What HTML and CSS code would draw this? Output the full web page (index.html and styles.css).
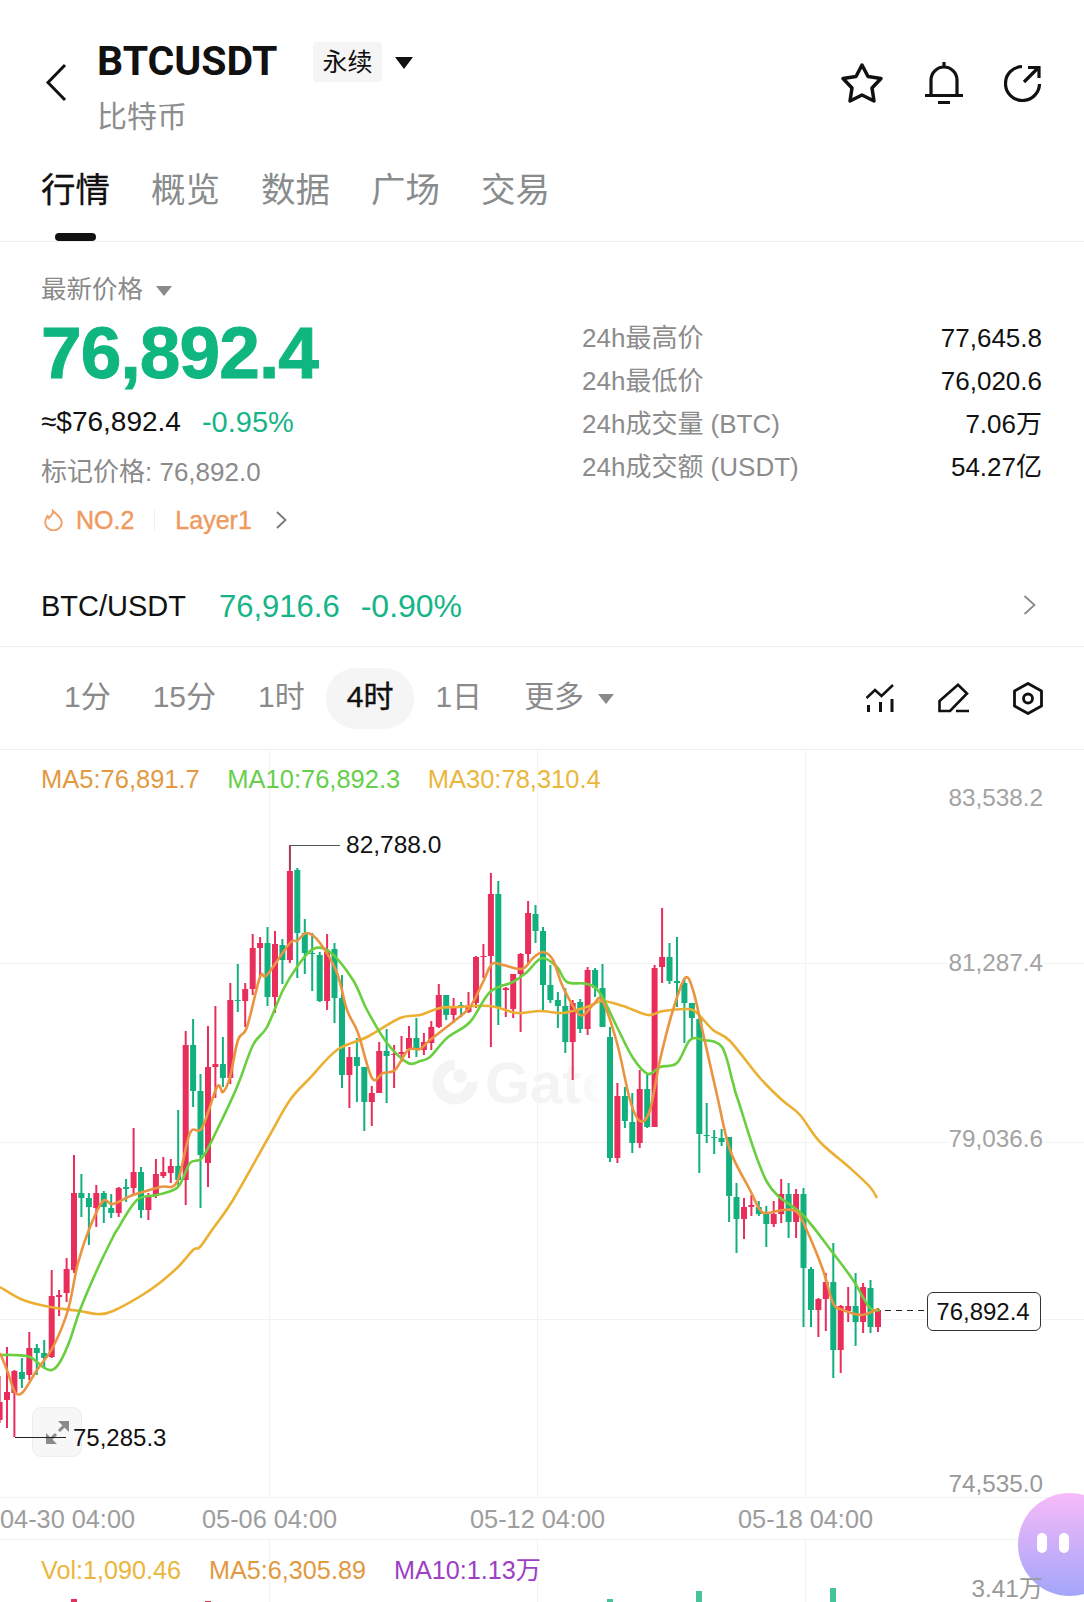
FILE: index.html
```html
<!DOCTYPE html>
<html lang="zh-CN">
<head>
  <meta charset="UTF-8">
  <meta name="viewport" content="width=device-width, initial-scale=1.0">
  <title>BTCUSDT</title>
  <link rel="stylesheet" href="styles.css">
</head>
<body>
  <div class="page">

    <header class="topbar">
      <svg class="back" width="22" height="39" viewBox="0 0 22 39"><path d="M20 2 L3 19.5 L20 37" fill="none" stroke="#111" stroke-width="3"/></svg>
      <div class="title-block">
        <div class="title-row">
          <span class="symbol">BTCUSDT</span>
          <span class="badge">永续</span>
          <span class="caret caret-dark"></span>
        </div>
        <div class="subtitle">比特币</div>
      </div>
      <div class="top-icons">
        <svg width="44" height="42" viewBox="0 0 44 42"><polygon points="22,3 28,14.5 41,16.5 32,26 34,39 22,33 10,39 12,26 3,16.5 16,14.5" fill="none" stroke="#111" stroke-width="3.5" stroke-linejoin="round"/></svg>
        <svg width="38" height="42" viewBox="0 0 38 42"><path d="M6 33 V18 a13 13 0 0 1 26 0 V33 M0 33.5 H38 M19 0 V5" fill="none" stroke="#111" stroke-width="3.2"/><path d="M13 40.5 H25" stroke="#111" stroke-width="3"/></svg>
        <svg width="38" height="38" viewBox="0 0 38 38"><path d="M18 2.5 A17 17 0 1 0 35.5 20" fill="none" stroke="#111" stroke-width="3.2"/><path d="M20 18 L34 4 M24 3.5 H35 V14" fill="none" stroke="#111" stroke-width="3.2"/></svg>
      </div>
    </header>

    <nav class="tabs">
      <a class="tab active">行情</a>
      <a class="tab">概览</a>
      <a class="tab">数据</a>
      <a class="tab">广场</a>
      <a class="tab">交易</a>
    </nav>

    <section class="stats">
      <div class="stats-left">
        <div class="price-label">最新价格 <span class="caret caret-grey"></span></div>
        <div class="price">76,892.4</div>
        <div class="fiat"><span>≈$76,892.4</span><span class="up">-0.95%</span></div>
        <div class="mark">标记价格: 76,892.0</div>
        <div class="rank">
          <svg width="19" height="22" viewBox="0 0 19 22"><path d="M9 2 C9.5 6 6 7 5 9 C4.5 8 4 7.5 3.5 7 C2 9.5 1.2 11.5 1.2 13.5 A8.2 7.8 0 0 0 17.8 13.5 C17.8 9 13 6 9 2Z" fill="none" stroke="#f0a26c" stroke-width="2"/></svg>
          <span class="rank-no">NO.2</span>
          <span class="rank-sep"></span>
          <span class="rank-no">Layer1</span>
          <svg class="rank-more" width="12" height="18" viewBox="0 0 12 18"><path d="M2 1 L10.5 9 L2 17" fill="none" stroke="#777" stroke-width="1.8"/></svg>
        </div>
      </div>
      <div class="stats-right">
        <div class="stat-row"><span>24h最高价</span><b>77,645.8</b></div>
        <div class="stat-row"><span>24h最低价</span><b>76,020.6</b></div>
        <div class="stat-row"><span>24h成交量 (BTC)</span><b>7.06万</b></div>
        <div class="stat-row"><span>24h成交额 (USDT)</span><b>54.27亿</b></div>
      </div>
    </section>

    <div class="spot">
      <span class="spot-name">BTC/USDT</span>
      <span class="up">76,916.6</span>
      <span class="up spot-change">-0.90%</span>
      <svg class="spot-more" width="13" height="20" viewBox="0 0 13 20"><path d="M1.5 1 L11.5 10 L1.5 19" fill="none" stroke="#8a8a8a" stroke-width="1.8"/></svg>
    </div>

    <div class="toolbar">
      <div class="periods">
        <a class="period">1分</a>
        <a class="period">15分</a>
        <a class="period">1时</a>
        <a class="period active">4时</a>
        <a class="period">1日</a>
        <a class="period">更多 <span class="caret caret-grey"></span></a>
      </div>
      <div class="tools">
        <svg width="28" height="28" viewBox="0 0 28 28"><path d="M0.5 14 L9 6 L15.5 12 L27 1" fill="none" stroke="#111" stroke-width="2.5"/><path d="M2.5 21 V28 M14.5 18 V28 M26 15 V28" fill="none" stroke="#111" stroke-width="3"/></svg>
        <svg width="31" height="30" viewBox="0 0 31 30"><path d="M1.5 18 L20 1.8 L29 10.5 L12 28 H1.5 Z M18 28 H31" fill="none" stroke="#111" stroke-width="2.6"/></svg>
        <svg width="30" height="33" viewBox="0 0 30 33"><polygon points="15,1.5 28.5,9 28.5,24 15,31.5 1.5,24 1.5,9" fill="none" stroke="#111" stroke-width="2.8" stroke-linejoin="round"/><circle cx="15" cy="16.5" r="4.5" fill="none" stroke="#111" stroke-width="2.8"/></svg>
      </div>
    </div>

    <div class="chart">
      <svg class="chart-canvas" id="canvas" width="1084" height="748" viewBox="0 749 1084 748"></svg>
      <div class="legend">
        <span class="c-ma5">MA5:76,891.7</span>
        <span class="c-ma10">MA10:76,892.3</span>
        <span class="c-ma30">MA30:78,310.4</span>
      </div>
      <span class="axis y1">83,538.2</span>
      <span class="axis y2">81,287.4</span>
      <span class="axis y3">79,036.6</span>
      <span class="axis y5">74,535.0</span>
      <span class="extreme high">82,788.0</span>
      <div class="expand">
        <svg width="23" height="23" viewBox="0 0 23 23"><path d="M12 0 H23 V11 Z M0 12 V23 H11 Z" fill="#8a8a8a"/><path d="M18 5 L13 10 M5 18 L10 13" stroke="#8a8a8a" stroke-width="3"/></svg>
      </div>
      <span class="extreme-line"></span>
      <span class="extreme low">75,285.3</span>
      <span class="last-dash"></span>
      <span class="last-tag">76,892.4</span>
    </div>

    <div class="time-axis">
      <span>04-30 04:00</span>
      <span>05-06 04:00</span>
      <span>05-12 04:00</span>
      <span>05-18 04:00</span>
    </div>

    <div class="volume">
      <svg class="volume-canvas" id="volume" width="1084" height="63" viewBox="0 1539 1084 63"></svg>
      <div class="legend">
        <span class="c-ma30">Vol:1,090.46</span>
        <span class="c-ma5">MA5:6,305.89</span>
        <span class="c-vol10">MA10:1.13万</span>
      </div>
      <span class="axis y6">3.41万</span>
    </div>

    <div class="bubble"><i></i><i></i></div>
  </div>

  <script src="chart.js"></script>
</body>
</html>
```

FILE: styles.css
```css
* {
  margin: 0;
  padding: 0;
  box-sizing: border-box;
}

body {
  background: #fff;
  color: #111;
  font-family: "Liberation Sans", "Noto Sans CJK SC", sans-serif;
}

.page {
  position: relative;
  width: 1084px;
  height: 1602px;
  overflow: hidden;
}

.up {
  color: #17b488;
}

.caret {
  display: inline-block;
  width: 0;
  height: 0;
  border-style: solid;
  border-color: transparent;
  border-bottom-width: 0;
}

.caret-dark {
  border-width: 12px 9px 0;
  border-top-color: #111;
  margin-top: 4px;
}

.caret-grey {
  border-width: 10px 8px 0;
  border-top-color: #8a8a8a;
  vertical-align: middle;
  margin-left: 6px;
}

/* top */
.topbar {
  display: flex;
  height: 156px;
  padding: 38px 42px 0 45px;
}

.back {
  margin-top: 25px;
}

.title-block {
  margin-left: 30px;
}

.title-row {
  display: flex;
  align-items: center;
  height: 46px;
}

.symbol {
  font-family: Roboto, "Liberation Sans", sans-serif;
  font-size: 41px;
  font-weight: 700;
  width: 216px;
}

.badge {
  width: 69px;
  height: 40px;
  background: #f5f5f5;
  border-radius: 3px;
  font-size: 25px;
  line-height: 40px;
  text-align: center;
  margin-right: 13px;
  margin-top: 2px;
}

.subtitle {
  font-size: 30px;
  line-height: 36px;
  margin-top: 15px;
  color: #8a8e8e;
}

.top-icons {
  display: flex;
  align-items: center;
  gap: 41px;
  margin-left: auto;
  height: 90px;
}

.tabs {
  display: flex;
  gap: 41px;
  height: 86px;
  padding-left: 41px;
  border-bottom: 1px solid #eee;
}

.tab {
  position: relative;
  font-size: 34.5px;
  line-height: 68px;
  color: #888c8c;
}

.tab.active {
  color: #111;
  -webkit-text-stroke: 0.3px #111;
}

.tab.active::after {
  content: "";
  position: absolute;
  left: 14px;
  top: 77px;
  width: 41px;
  height: 8px;
  border-radius: 4px;
  background: #111;
}

/* price block */
.stats {
  display: flex;
  justify-content: space-between;
  padding: 32px 42px 0 41px;
}

.price-label {
  font-size: 25.5px;
  line-height: 30px;
  color: #8a8a8a;
}

.price {
  font-size: 73px;
  font-weight: bold;
  line-height: 80px;
  letter-spacing: -0.9px;
  color: #0fb67f;
  -webkit-text-stroke: 1px #0fb67f;
  margin-top: 9px;
}

.fiat {
  display: flex;
  gap: 21px;
  font-size: 28px;
  line-height: 34px;
  margin-top: 12px;
}

.fiat .up {
  font-size: 29px;
}

.mark {
  font-size: 26px;
  line-height: 34px;
  margin-top: 16px;
  color: #8b8b8b;
}

.rank {
  display: flex;
  align-items: center;
  height: 30px;
  margin-top: 16px;
  padding-left: 3px;
}

.rank-no {
  font-size: 25px;
  color: #ee9a5e;
  -webkit-text-stroke: 0.4px #ee9a5e;
}

.rank svg:first-child {
  margin-right: 13px;
}

.rank-sep {
  width: 1px;
  height: 20px;
  background: #eee;
  margin: 0 20px;
}

.rank-more {
  margin-left: 23px;
}

.stats-right {
  width: 460px;
  padding-top: 43px;
}

.stat-row {
  display: flex;
  justify-content: space-between;
  height: 43px;
  font-size: 26px;
  line-height: 43px;
  color: #8c8c8c;
}

.stat-row b {
  font-weight: normal;
  color: #111;
}

.spot {
  display: flex;
  align-items: center;
  height: 80px;
  margin-top: 32px;
  padding: 0 48px 0 41px;
  font-size: 31px;
  border-bottom: 1px solid #eee;
}

.spot-name {
  font-size: 29px;
  margin-right: 33px;
}

.spot-change {
  font-size: 32px;
  margin-left: 21px;
}

.spot-more {
  margin-left: auto;
  margin-bottom: 4px;
}

/* period bar */
.toolbar {
  display: flex;
  align-items: center;
  justify-content: space-between;
  height: 103px;
  padding: 0 41px 0 43px;
  border-bottom: 1px solid #eee;
}

.periods {
  display: flex;
}

.period {
  height: 61px;
  padding: 0 21px;
  font-size: 30px;
  line-height: 57px;
  color: #8a8a8a;
  border-radius: 30px;
}

.period.active {
  background: #f5f5f5;
  color: #111;
  -webkit-text-stroke: 0.4px #111;
}

.tools {
  display: flex;
  align-items: center;
  gap: 44px;
}

/* chart */
.chart {
  position: relative;
  height: 747px;
}

.chart-canvas,
.volume-canvas {
  position: absolute;
  left: 0;
  top: -1px;
}

.volume-canvas {
  top: 0;
}

.legend {
  position: relative;
  display: flex;
  gap: 27.5px;
  padding: 14px 0 0 41px;
  font-size: 25.5px;
  line-height: 30px;
}

.c-ma5 {
  color: #e2993f;
}

.c-ma10 {
  color: #66cf4a;
}

.c-ma30 {
  color: #ebb63c;
}

.c-vol10 {
  color: #9c3fc4;
}

.axis {
  position: absolute;
  right: 41px;
  background: #fff;
  color: #a3a3a3;
  font-size: 24.3px;
  line-height: 30px;
}

.y1 { top: 33px; }
.y2 { top: 198px; }
.y3 { top: 374px; }
.y5 { top: 719px; color: #999; background: none; }
.y6 { top: 34px; color: #999; background: none; z-index: 2; }

.extreme {
  position: absolute;
  font-size: 24.5px;
  line-height: 30px;
  color: #111;
}

.high {
  left: 346px;
  top: 80px;
}

.low {
  left: 73px;
  top: 673px;
  font-size: 24px;
}

.extreme-line {
  position: absolute;
  left: 15px;
  top: 687px;
  width: 51px;
  height: 1px;
  background: #222;
}

.expand {
  position: absolute;
  left: 32px;
  top: 657px;
  width: 50px;
  height: 50px;
  display: flex;
  align-items: center;
  justify-content: center;
  background: rgba(246, 246, 246, 0.85);
  border: 1px solid #eee;
  border-radius: 9px;
}

.last-dash {
  position: absolute;
  left: 885px;
  top: 560px;
  width: 42px;
  height: 1px;
  background: repeating-linear-gradient(90deg, #222 0 6px, transparent 6px 11px);
}

.last-tag {
  position: absolute;
  left: 927px;
  top: 542px;
  width: 114px;
  height: 39px;
  padding-right: 2px;
  background: #fff;
  border: 1px solid #333;
  border-radius: 6px;
  font-size: 24px;
  line-height: 37px;
  text-align: center;
}

.time-axis {
  display: grid;
  grid-template-columns: 202px 268px 268px auto;
  height: 43px;
  font-size: 25.3px;
  line-height: 42px;
  color: #9d9d9d;
  background: #fff;
  border-top: 1px solid #f2f2f2;
  border-bottom: 1px solid #f2f2f2;
}

.volume {
  position: relative;
  height: 63px;
}

.volume .legend {
  gap: 28px;
  padding-top: 15px;
  font-size: 25.2px;
}

.bubble {
  position: absolute;
  left: 1017.5px;
  top: 1493px;
  width: 103px;
  height: 103px;
  display: flex;
  gap: 12px;
  padding: 40px 0 0 19px;
  border-radius: 50%;
  background: linear-gradient(#f7baf8, #a3a5fa);
}

.bubble i {
  width: 10px;
  height: 20px;
  border-radius: 5px;
  background: #fff;
}
```

FILE: chart.js
```js
// high, low, body top, body bottom, r/g (page y, first candle is index -10)
const candles = [
  [1376,1423,1402,1420,'r'],[1347,1428,1392,1400,'r'],[1370,1437,1371,1393,'r'],[1358,1388,1372,1379,'g'],
  [1332,1380,1348,1375,'r'],[1344,1375,1348,1353,'g'],[1340,1368,1353,1358,'g'],[1270,1358,1296,1357,'r'],
  [1290,1316,1295,1297,'r'],[1258,1302,1269,1293,'r'],[1155,1273,1193,1270,'r'],[1174,1217,1193,1198,'g'],
  [1193,1245,1198,1207,'g'],[1185,1227,1193,1208,'r'],[1191,1223,1193,1207,'g'],[1194,1218,1208,1213,'g'],
  [1187,1217,1188,1213,'r'],[1179,1202,1187,1189,'g'],[1128,1195,1172,1188,'r'],[1167,1218,1172,1210,'g'],
  [1193,1220,1197,1210,'r'],[1159,1198,1174,1195,'r'],[1157,1178,1172,1176,'r'],[1159,1183,1166,1173,'r'],
  [1110,1187,1166,1180,'g'],[1031,1205,1045,1180,'r'],[1019,1107,1045,1091,'g'],[1074,1208,1091,1155,'g'],
  [1026,1187,1067,1163,'r'],[1006,1098,1064,1067,'r'],[1037,1087,1064,1078,'g'],[983,1084,1000,1078,'r'],
  [964,1012,1000,1001,'g'],[983,1027,989,1001,'r'],[934,995,948,989,'r'],[937,977,943,948,'r'],
  [927,1006,943,997,'g'],[931,1013,944,997,'r'],[939,984,945,960,'g'],[845,963,871,960,'r'],
  [868,978,870,933,'g'],[919,974,933,953,'g'],[933,991,953,954,'g'],[952,1002,955,1001,'g'],
  [934,1010,952,1001,'r'],[943,1023,949,998,'g'],[975,1088,998,1075,'g'],[1047,1108,1057,1075,'r'],
  [1038,1102,1057,1066,'g'],[1067,1131,1067,1102,'g'],[1086,1126,1093,1102,'r'],[1042,1093,1051,1093,'r'],
  [1029,1103,1051,1056,'g'],[1045,1088,1054,1055,'r'],[1036,1062,1052,1054,'r'],[1026,1058,1038,1049,'r'],
  [1018,1057,1038,1049,'g'],[1033,1055,1042,1050,'r'],[1021,1050,1027,1043,'r'],[984,1028,995,1027,'r'],
  [995,1020,995,1015,'g'],[998,1023,1008,1015,'r'],[1002,1017,1005,1006,'g'],[992,1013,1005,1012,'r'],
  [956,1008,957,1003,'r'],[944,978,956,957,'r'],[873,1047,894,956,'r'],[881,1025,894,1007,'g'],
  [987,1017,988,990,'r'],[974,1018,974,1009,'r'],[953,1032,954,974,'r'],[901,963,913,954,'r'],
  [905,943,914,931,'g'],[927,1010,931,985,'g'],[965,1003,985,1000,'g'],[992,1028,1000,1006,'g'],
  [988,1053,1006,1042,'g'],[1000,1080,1003,1042,'r'],[999,1033,1002,1029,'g'],[967,1035,970,1029,'r'],
  [968,997,970,988,'g'],[964,1027,988,1027,'g'],[1027,1162,1037,1158,'g'],[1083,1163,1096,1158,'r'],
  [1087,1128,1096,1121,'g'],[1093,1153,1122,1143,'g'],[1070,1148,1089,1143,'r'],[1073,1128,1089,1127,'g'],
  [965,1127,968,1127,'r'],[908,983,957,967,'r'],[943,984,957,981,'g'],[937,1007,981,983,'g'],
  [978,1043,983,1003,'g'],[1003,1038,1003,1018,'g'],[1018,1173,1019,1134,'g'],[1103,1143,1135,1136,'g'],
  [1130,1154,1137,1138,'g'],[1129,1146,1138,1142,'g'],[1137,1222,1137,1196,'g'],[1183,1253,1197,1219,'g'],
  [1198,1239,1207,1219,'r'],[1195,1216,1205,1207,'r'],[1201,1216,1207,1214,'g'],[1206,1247,1214,1224,'g'],
  [1201,1227,1214,1224,'r'],[1179,1223,1194,1214,'r'],[1183,1238,1194,1222,'g'],[1189,1238,1194,1222,'r'],
  [1188,1327,1194,1268,'g'],[1267,1327,1269,1310,'g'],[1298,1337,1299,1310,'r'],[1273,1331,1282,1299,'r'],
  [1243,1378,1282,1350,'g'],[1305,1373,1306,1350,'r'],[1287,1322,1306,1311,'r'],[1273,1346,1306,1322,'g'],
  [1283,1333,1287,1322,'r'],[1280,1333,1288,1327,'g'],[1308,1332,1310,1327,'r']
];

const ma30 = "0,1287 23,1300 50,1307 80,1311 97,1314 113,1311 150,1290 177,1268 193,1250 200,1247 212,1230 233,1200 267,1140 290,1100 310,1078 337,1050 367,1037 400,1018 420,1015 440,1008 457,1007 490,1006 517,1013 540,1011 563,1013 587,1007 602,1001 623,1006 648,1015 663,1011 687,1009 697,1013 713,1030 730,1041 760,1078 782,1100 800,1115 820,1142 850,1168 870,1187 877,1198";
const ma10 = "0,1355 13,1355 30,1357 43,1367 52,1370 60,1362 70,1340 80,1310 97,1270 113,1237 117,1230 137,1200 157,1195 178,1187 190,1163 202,1158 217,1130 237,1087 253,1045 267,1027 283,990 297,967 313,949 330,952 353,980 367,1010 387,1043 408,1063 420,1061 430,1057 447,1038 470,1022 490,992 513,982 527,972 542,958 557,967 567,982 587,984 600,993 617,1027 633,1058 648,1074 660,1067 677,1063 690,1040 703,1040 722,1047 733,1083 738,1100 767,1182 803,1215 833,1253 853,1280 870,1308 880,1310";
const ma5 = "0,1353 7,1370 15,1392 23,1392 37,1370 53,1347 68,1310 78,1263 90,1227 103,1201 113,1204 133,1195 160,1187 177,1182 190,1133 202,1128 217,1087 223,1092 230,1077 238,1040 247,1027 260,977 267,975 290,943 297,941 307,933 320,943 337,973 347,1010 358,1033 372,1078 383,1073 395,1070 408,1050 420,1049 430,1040 453,1022 470,1007 483,982 492,964 503,965 522,969 533,958 543,952 553,960 563,987 580,1015 593,1005 602,1000 617,1043 630,1100 640,1121 650,1110 660,1060 673,1010 685,978 693,990 703,1033 717,1095 730,1150 750,1190 760,1210 768,1213 783,1210 797,1212 808,1233 823,1270 833,1303 843,1310 862,1315 878,1309";

const RED = "#ea2e5b";
const GREEN = "#12b07f";
const STEP = 7.444;

let html = "";

// grid
;[963, 1142, 1319].forEach((y) => {
  html += `<path d="M0 ${y + 0.5} H1084" stroke="#f2f2f2"/>`;
});
;[269, 537, 805].forEach((x) => {
  html += `<path d="M${x + 0.5} 749 V1497" stroke="#f2f2f2"/>`;
});

// watermark, the last letter fades out
html += `<defs><linearGradient id="fade" gradientUnits="userSpaceOnUse" x1="575" y1="0" x2="605" y2="0"><stop offset="0" stop-color="#f4f4f4"/><stop offset="1" stop-color="#fff"/></linearGradient></defs>`;
html += `<path d="M472 1082 A17 17 0 1 1 455 1065" fill="none" stroke="#f4f4f4" stroke-width="11"/>`;
html += `<circle cx="460" cy="1076" r="7" fill="#f4f4f4"/>`;
html += `<text x="485" y="1103" font-size="58" font-weight="bold" fill="url(#fade)" font-family="Liberation Sans">Gate</text>`;

candles.forEach((c, n) => {
  const x = 74 + STEP * (n - 10);
  const color = c[4] == "r" ? RED : GREEN;
  html += `<rect x="${(x - 1).toFixed(1)}" y="${c[0]}" width="2" height="${c[1] - c[0]}" fill="${color}"/>`;
  html += `<rect x="${(x - 3).toFixed(1)}" y="${c[2]}" width="6" height="${c[3] - c[2]}" fill="${color}"/>`;
});

// catmull-rom through the points so the averages are not angular
function smooth(points) {
  const p = points.split(" ").map((s) => s.split(",").map(Number));
  let d = `M${p[0][0]} ${p[0][1]}`;
  for (let i = 0; i < p.length - 1; i++) {
    const a = p[Math.max(i - 1, 0)];
    const b = p[i];
    const c = p[i + 1];
    const e = p[Math.min(i + 2, p.length - 1)];
    const c1 = [b[0] + (c[0] - a[0]) / 6, b[1] + (c[1] - a[1]) / 6];
    const c2 = [c[0] - (e[0] - b[0]) / 6, c[1] - (e[1] - b[1]) / 6];
    d += ` C${c1[0].toFixed(1)} ${c1[1].toFixed(1)} ${c2[0].toFixed(1)} ${c2[1].toFixed(1)} ${c[0]} ${c[1]}`;
  }
  return d;
}

const line = (points, color) => `<path d="${smooth(points)}" fill="none" stroke="${color}" stroke-width="2.6"/>`;
html += line(ma30, "#ebb032");
html += line(ma10, "#69cf3f");
html += line(ma5, "#ea9440");

// line to the high label
html += `<path d="M290 869 V845.5 H340" fill="none" stroke="#555"/>`;

document.getElementById("canvas").innerHTML = html;

// volume: only the tips of the tallest bars show
let bars = `<path d="M269.5 1539 V1602 M537.5 1539 V1602 M805.5 1539 V1602" stroke="#f2f2f2"/>`;
;[[74, 1598, RED], [208, 1600, RED], [610, 1598, "#45c49a"], [699, 1590, "#45c49a"], [833, 1587, "#45c49a"]].forEach((b) => {
  bars += `<rect x="${b[0] - 3}" y="${b[1]}" width="6" height="${1602 - b[1]}" fill="${b[2]}"/>`;
});
document.getElementById("volume").innerHTML = bars;
```
